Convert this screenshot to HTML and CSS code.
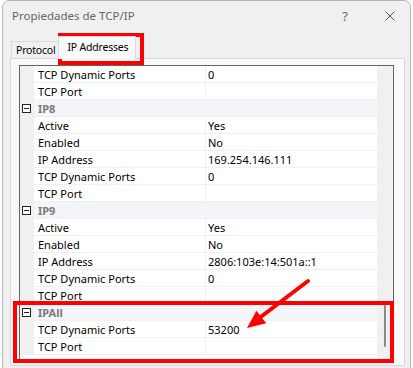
FILE: index.html
```html
<!DOCTYPE html>
<html lang="es">
<head>
    <meta charset="UTF-8">
    <meta name="viewport" content="width=device-width, initial-scale=1.0">
    <title>Propiedades de TCP/IP</title>
    <link rel="stylesheet" href="styles.css">
</head>
<body>
    <div class="window">
        <div class="titlebar">
            <span class="title">Propiedades de TCP/IP</span>
            <span class="help">?</span>
            <span class="close">
                <svg width="10" height="10" viewBox="0 0 10 10">
                    <path d="M0.5 0.5 L9.5 9.5 M9.5 0.5 L0.5 9.5" stroke="#555" stroke-width="1" fill="none"/>
                </svg>
            </span>
        </div>
        <div class="tabs">
            <div class="tab">Protocol</div>
            <div class="tab active">IP Addresses</div>
        </div>
        <div class="panel">
            <div class="grid">
                <div class="rows">
                    <div class="row"><div class="gutter"></div><div class="name">TCP Dynamic Ports</div><div class="value">0</div></div>
                    <div class="row"><div class="gutter"></div><div class="name">TCP Port</div><div class="value"></div></div>
                    <div class="row category"><div class="gutter"><span class="toggle"></span></div><div class="label">IP8</div></div>
                    <div class="row"><div class="gutter"></div><div class="name">Active</div><div class="value">Yes</div></div>
                    <div class="row"><div class="gutter"></div><div class="name">Enabled</div><div class="value">No</div></div>
                    <div class="row"><div class="gutter"></div><div class="name">IP Address</div><div class="value">169.254.146.111</div></div>
                    <div class="row"><div class="gutter"></div><div class="name">TCP Dynamic Ports</div><div class="value">0</div></div>
                    <div class="row"><div class="gutter"></div><div class="name">TCP Port</div><div class="value"></div></div>
                    <div class="row category"><div class="gutter"><span class="toggle"></span></div><div class="label">IP9</div></div>
                    <div class="row"><div class="gutter"></div><div class="name">Active</div><div class="value">Yes</div></div>
                    <div class="row"><div class="gutter"></div><div class="name">Enabled</div><div class="value">No</div></div>
                    <div class="row"><div class="gutter"></div><div class="name">IP Address</div><div class="value">2806:103e:14:501a::1</div></div>
                    <div class="row"><div class="gutter"></div><div class="name">TCP Dynamic Ports</div><div class="value">0</div></div>
                    <div class="row"><div class="gutter"></div><div class="name">TCP Port</div><div class="value"></div></div>
                    <div class="row category"><div class="gutter"><span class="toggle"></span></div><div class="label">IPAll</div></div>
                    <div class="row"><div class="gutter"></div><div class="name">TCP Dynamic Ports</div><div class="value">53200</div></div>
                    <div class="row"><div class="gutter"></div><div class="name">TCP Port</div><div class="value"></div></div>
                </div>
                <div class="scroll"><div class="thumb"></div></div>
            </div>
        </div>
    </div>

    <!-- red annotations drawn over the dialog -->
    <div class="mark mark-tab"></div>
    <div class="mark mark-ipall"></div>
    <svg class="arrow" width="413" height="368" viewBox="0 0 413 368">
        <line x1="308" y1="281" x2="258" y2="319" stroke="#f00" stroke-width="4" stroke-linecap="round"/>
        <polygon points="247,328 256.4,310.7 266.2,323.3" fill="#f00"/>
    </svg>
</body>
</html>
```

FILE: styles.css
```css
body {
    margin: 0;
    width: 413px;
    height: 368px;
    overflow: hidden;
    position: relative;
    background: #fff;
    font-family: "Noto Sans", "Open Sans", sans-serif;
    font-size: 11px;
    color: #000;
}

.window {
    margin-left: 2px;
    width: 407px;
    height: 380px;
    background: #f0f0f0;
    border: 1px solid #b8b8b8;
    border-radius: 7px 7px 0 0;
}

.titlebar {
    height: 29px;
    display: flex;
    align-items: center;
    padding: 0 10px 0 9px;
    color: #666;
    font-size: 11.5px;
}

.help {
    margin-left: auto;
    margin-right: 25px;
    width: 20px;
    text-align: center;
    font-size: 13px;
    color: #666;
}

.close {
    width: 20px;
    height: 10px;
    display: flex;
    justify-content: center;
}

.tabs {
    height: 28px;
    display: flex;
    align-items: flex-end;
    padding-left: 8px;
}

.tab {
    height: 16px;
    line-height: 16px;
    padding: 0 3px 0 4px;
    border: 1px solid #d9d9d9;
    border-bottom: none;
    background: #f0f0f0;
    font-size: 10.5px;
    letter-spacing: -0.2px;
}

.tab.active {
    height: 22px;
    line-height: 20px;
    padding: 0 7px 0 8px;
    margin-bottom: -1px;
    margin-left: -1px;
    background: #f9f9f9;
    position: relative;
    z-index: 1;
}

.panel {
    margin-left: 7px;
    width: 377px;
    height: 300px;
    padding: 6px 8px 0 8px;
    background: #f9f9f9;
    border: 1px solid #d9d9d9;
}

.grid {
    display: flex;
    width: 373px;
    height: 295px;
    border: 1px solid #646464;
    background: #fff;
}

.rows {
    width: 357px;
    display: flex;
    flex-direction: column;
}

.row {
    display: flex;
    height: 17px;
}

.gutter {
    width: 14px;
    flex: none;
    background: #f0f0f0;
}

.name,
.value,
.label {
    height: 15px;
    padding-top: 1px;
    line-height: 16px;
    border-bottom: 1px solid #f0f0f0;
    white-space: nowrap;
}

.name {
    width: 167px;
    padding-left: 4px;
    border-right: 1px solid #f0f0f0;
}

.value {
    flex: 1;
    padding-left: 2px;
}

.category .label {
    flex: 1;
    padding-left: 4px;
    background: #f3f5f9;
    color: #7a7a7a;
    font-weight: bold;
}

.toggle {
    display: block;
    position: relative;
    width: 7px;
    height: 7px;
    margin: 4px 0 0 2px;
    border: 1px solid #222;
    background: #fff;
}

.toggle::after {
    content: "";
    position: absolute;
    left: 1px;
    top: 3px;
    width: 5px;
    height: 1px;
    background: #222;
}

.scroll {
    width: 16px;
    background: #f0f0f0;
    padding: 239px 0 0 7px;
    box-sizing: border-box;
}

.thumb {
    width: 2px;
    height: 42px;
    background: #8a8a8a;
    border-radius: 1px;
}

.mark {
    position: absolute;
    border: 4px solid #f00;
    box-sizing: border-box;
}

.mark-tab {
    left: 58px;
    top: 33px;
    width: 86px;
    height: 32px;
}

.mark-ipall {
    left: 13px;
    top: 301px;
    width: 381px;
    height: 62px;
}

.arrow {
    position: absolute;
    left: 0;
    top: 0;
}
```
